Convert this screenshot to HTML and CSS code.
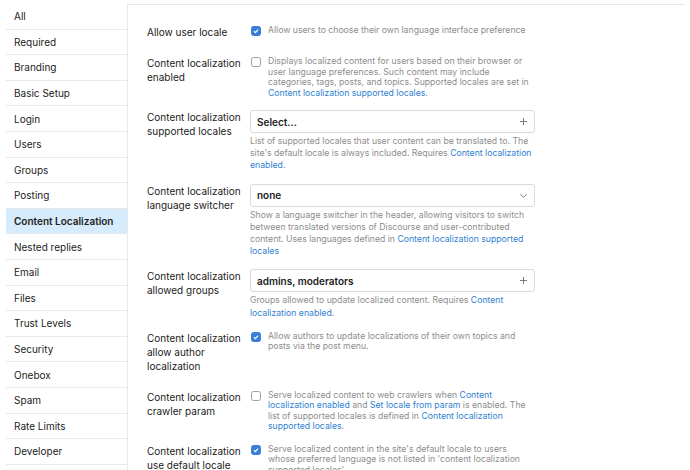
FILE: index.html
```html
<!DOCTYPE html>
<html>
<head>
<meta charset="utf-8">
<link rel="stylesheet" href="styles.css">
</head>
<body>
<div class="page">
  <nav class="sidebar">
    <div class="nav-item">All</div>
    <div class="nav-item">Required</div>
    <div class="nav-item">Branding</div>
    <div class="nav-item">Basic Setup</div>
    <div class="nav-item">Login</div>
    <div class="nav-item">Users</div>
    <div class="nav-item">Groups</div>
    <div class="nav-item">Posting</div>
    <div class="nav-item active">Content Localization</div>
    <div class="nav-item">Nested replies</div>
    <div class="nav-item">Email</div>
    <div class="nav-item">Files</div>
    <div class="nav-item">Trust Levels</div>
    <div class="nav-item">Security</div>
    <div class="nav-item">Onebox</div>
    <div class="nav-item">Spam</div>
    <div class="nav-item">Rate Limits</div>
    <div class="nav-item">Developer</div>
    <div class="nav-item">Embedding</div>
  </nav>
  <main class="main">
    <div class="row">
      <div class="label">Allow user locale</div>
      <div class="value check-row">
        <span class="cb checked"><svg viewBox="0 0 10 10"><polyline points="2.4,5.2 4.2,7 7.6,3.2"/></svg></span>
        <div class="desc tight">Allow users to choose their own language interface preference</div>
      </div>
    </div>
    <div class="row">
      <div class="label">Content localization enabled</div>
      <div class="value check-row">
        <span class="cb"></span>
        <div class="desc tight">Displays localized content for users based on their browser or user language preferences. Such content may include categories, tags, posts, and topics. Supported locales are set in <a>Content localization supported locales</a>.</div>
      </div>
    </div>
    <div class="row">
      <div class="label">Content localization supported locales</div>
      <div class="value">
        <div class="input"><span class="input-text">Select...</span>
          <svg class="plus" viewBox="0 0 10 10"><path d="M5 1v8M1 5h8"/></svg></div>
        <div class="desc">List of supported locales that user content can be translated to. The site's default locale is always included. Requires <a>Content localization enabled</a>.</div>
      </div>
    </div>
    <div class="row">
      <div class="label">Content localization language switcher</div>
      <div class="value">
        <div class="input"><span class="input-text">none</span>
          <svg class="chev" viewBox="0 0 10 10"><path d="M1.5 3.5L5 7l3.5-3.5"/></svg></div>
        <div class="desc">Show a language switcher in the header, allowing visitors to switch between translated versions of Discourse and user-contributed content. Uses languages defined in <a>Content localization supported locales</a></div>
      </div>
    </div>
    <div class="row">
      <div class="label">Content localization allowed groups</div>
      <div class="value">
        <div class="input"><span class="input-text">admins, moderators</span>
          <svg class="plus" viewBox="0 0 10 10"><path d="M5 1v8M1 5h8"/></svg></div>
        <div class="desc">Groups allowed to update localized content. Requires <a>Content localization enabled</a>.</div>
      </div>
    </div>
    <div class="row">
      <div class="label">Content localization allow author localization</div>
      <div class="value check-row">
        <span class="cb checked"><svg viewBox="0 0 10 10"><polyline points="2.4,5.2 4.2,7 7.6,3.2"/></svg></span>
        <div class="desc tight">Allow authors to update localizations of their own topics and posts via the post menu.</div>
      </div>
    </div>
    <div class="row">
      <div class="label">Content localization crawler param</div>
      <div class="value check-row">
        <span class="cb"></span>
        <div class="desc tight">Serve localized content to web crawlers when <a>Content localization enabled</a> and <a>Set locale from param</a> is enabled. The list of supported locales is defined in <a>Content localization supported locales</a>.</div>
      </div>
    </div>
    <div class="row">
      <div class="label">Content localization use default locale</div>
      <div class="value check-row">
        <span class="cb checked"><svg viewBox="0 0 10 10"><polyline points="2.4,5.2 4.2,7 7.6,3.2"/></svg></span>
        <div class="desc tight">Serve localized content in the site's default locale to users whose preferred language is not listed in 'content localization supported locales'.</div>
      </div>
    </div>
  </main>
</div>
</body>
</html>
```
FILE: styles.css
```css
html, body {
  margin: 0;
  padding: 0;
  background: #fff;
  font-family: Inter, "Noto Sans", sans-serif;
  color: #222;
  overflow: hidden;
  height: 100%;
}
.page {
  display: flex;
  align-items: stretch;
  padding: 4px 5px 0 6px;
  height: 100%;
  box-sizing: border-box;
}
.sidebar {
  flex: 0 0 122px;
  min-width: 0;
  overflow: hidden;
  border-right: 1px solid #e9e9e9;
  box-sizing: border-box;
}
.nav-item {
  font-size: 10px;
  line-height: 14px;
  padding: 5.3px 8px;
  border-bottom: 1px solid #e9e9e9;
  white-space: nowrap;
}
.nav-item.active {
  background: #d6ebfb;
  font-weight: 600;
}
.main {
  flex: 1;
  min-width: 0;
  border-top: 1px solid #e7e7e7;
  padding: 20px 0 0 19px;
}
.row {
  display: flex;
  align-items: flex-start;
  margin-bottom: 12px;
}
.label {
  flex: 0 0 103px;
  font-size: 10px;
  line-height: 14px;
  padding-bottom: 5px;
}
.value {
  flex: 0 0 285px;
}
.check-row {
  display: flex;
  align-items: flex-start;
  gap: 7px;
}
.cb {
  flex: 0 0 10px;
  width: 10px;
  height: 10px;
  box-sizing: border-box;
  border: 1px solid #9c9c9c;
  border-radius: 2.5px;
  margin-top: 1px;
  margin-left: 1px;
  background: #fff;
}
.cb.checked {
  background: #3a7fd5;
  border-color: #3a7fd5;
}
.cb svg {
  display: block;
  width: 8px;
  height: 8px;
  fill: none;
  stroke: #fff;
  stroke-width: 1.4;
}
.desc {
  font-size: 8.7px;
  line-height: 12.2px;
  color: #8d8d8d;
  margin-top: 2px;
}
.desc.tight {
  line-height: 10.5px;
  margin-top: 0;
  flex: 1;
}
.desc a {
  color: #2f7fd2;
}
.input {
  height: 23px;
  box-sizing: border-box;
  border: 1px solid #dadada;
  border-radius: 3px;
  display: flex;
  align-items: center;
  justify-content: space-between;
  padding: 0 6px 0 6px;
}
.input-text {
  font-size: 10px;
  font-weight: 600;
  color: #222;
}
.plus, .chev {
  width: 9px;
  height: 9px;
  fill: none;
  stroke: #7a7a7a;
  stroke-width: 1.1;
}
```
